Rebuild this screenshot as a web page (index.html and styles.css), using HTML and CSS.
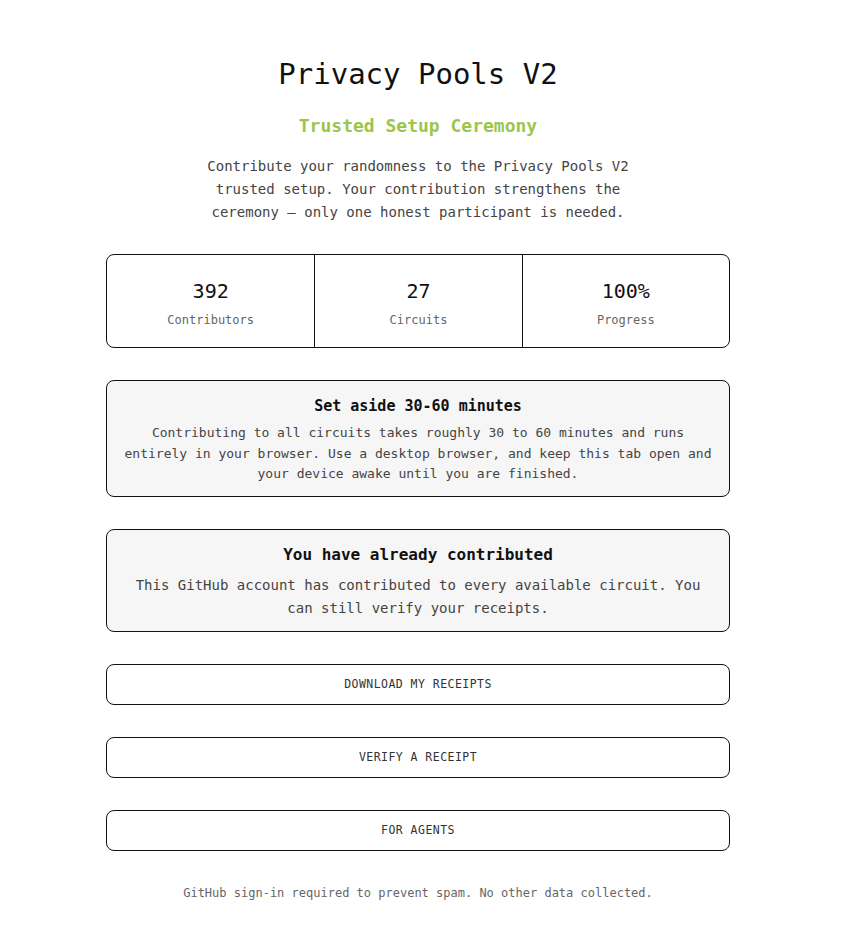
FILE: index.html
```html
<!DOCTYPE html>
<html lang="en">
<head>
    <meta charset="UTF-8">
    <meta name="viewport" content="width=device-width, initial-scale=1.0">
    <title>Privacy Pools V2 — Trusted Setup Ceremony</title>
    <link rel="stylesheet" href="styles.css">
</head>
<body>
    <main class="page">
        <header class="intro">
            <h1>Privacy Pools V2</h1>
            <h2>Trusted Setup Ceremony</h2>
            <p>Contribute your randomness to the Privacy Pools V2<br>trusted setup. Your contribution strengthens the<br>ceremony — only one honest participant is needed.</p>
        </header>

        <section class="stats">
            <div class="stat">
                <span class="stat-value">392</span>
                <span class="stat-label">Contributors</span>
            </div>
            <div class="stat">
                <span class="stat-value">27</span>
                <span class="stat-label">Circuits</span>
            </div>
            <div class="stat">
                <span class="stat-value">100%</span>
                <span class="stat-label">Progress</span>
            </div>
        </section>

        <section class="notice notice-time">
            <h3>Set aside 30-60 minutes</h3>
            <p>Contributing to all circuits takes roughly 30 to 60 minutes and runs entirely in your browser. Use a desktop browser, and keep this tab open and your device awake until you are finished.</p>
        </section>

        <section class="notice notice-done">
            <h3>You have already contributed</h3>
            <p>This GitHub account has contributed to every available circuit. You can still verify your receipts.</p>
        </section>

        <button class="action">Download my receipts</button>
        <button class="action">Verify a receipt</button>
        <button class="action">For agents</button>

        <p class="footnote">GitHub sign-in required to prevent spam. No other data collected.</p>
    </main>
</body>
</html>
```

FILE: styles.css
```css
:root {
    --ink: #111;
    --muted: #444;
    --faint: #666;
    --green: #9bc64a;
    --panel: #f6f6f6;
}

body {
    margin: 0;
    padding: 0 22px 0 0;
    background: #fff;
    color: var(--ink);
    font-family: "DejaVu Sans Mono", "Liberation Mono", monospace;
}

.page {
    width: 624px;
    margin: 0 auto;
    padding: 56px 0 28px;
    display: flex;
    flex-direction: column;
    gap: 32px;
}

/* Heading block */
.intro {
    text-align: center;
}

.intro h1 {
    margin: 0;
    font-size: 29px;
    font-weight: 400;
    line-height: 36px;
}

.intro h2 {
    margin: 22px 0 0;
    font-size: 18px;
    font-weight: 700;
    color: var(--green);
    line-height: 24px;
}

.intro p {
    margin: 17px 0 0;
    font-size: 14px;
    line-height: 23px;
    color: var(--muted);
}

/* Stats row */
.stats {
    display: grid;
    grid-template-columns: repeat(3, 1fr);
    border: 1px solid var(--ink);
    border-radius: 8px;
    margin-top: -2px;
}

.stat {
    display: flex;
    flex-direction: column;
    align-items: center;
    padding: 23px 0 19px;
}

.stat + .stat {
    border-left: 1px solid var(--ink);
}

.stat-value {
    font-size: 20px;
    line-height: 26px;
}

.stat-label {
    margin-top: 8px;
    font-size: 12px;
    line-height: 16px;
    color: var(--faint);
}

/* Info panels */
.notice {
    background: var(--panel);
    border: 1px solid var(--ink);
    border-radius: 8px;
    text-align: center;
}

.notice h3 {
    margin: 0;
    font-weight: 700;
}

.notice p {
    margin: 0;
    color: var(--muted);
}

.notice-time {
    padding: 15px 16px 11px;
}

.notice-time h3 {
    font-size: 15px;
    line-height: 20px;
}

.notice-time p {
    margin-top: 7px;
    font-size: 13px;
    line-height: 20.5px;
}

.notice-done {
    padding: 14px 24px 11px;
}

.notice-done h3 {
    font-size: 16px;
    line-height: 22px;
    font-weight: 600;
}

.notice-done p {
    margin-top: 8px;
    font-size: 14px;
    line-height: 23px;
}

/* Buttons */
.action {
    height: 41px;
    background: #fff;
    border: 1px solid var(--ink);
    border-radius: 8px;
    font-family: inherit;
    font-size: 11.5px;
    letter-spacing: 0.04em;
    text-transform: uppercase;
    color: #333;
    cursor: pointer;
}

.action:hover {
    background: var(--panel);
}

.footnote {
    margin: 3px 0 0;
    text-align: center;
    font-size: 12px;
    color: var(--faint);
}
```
